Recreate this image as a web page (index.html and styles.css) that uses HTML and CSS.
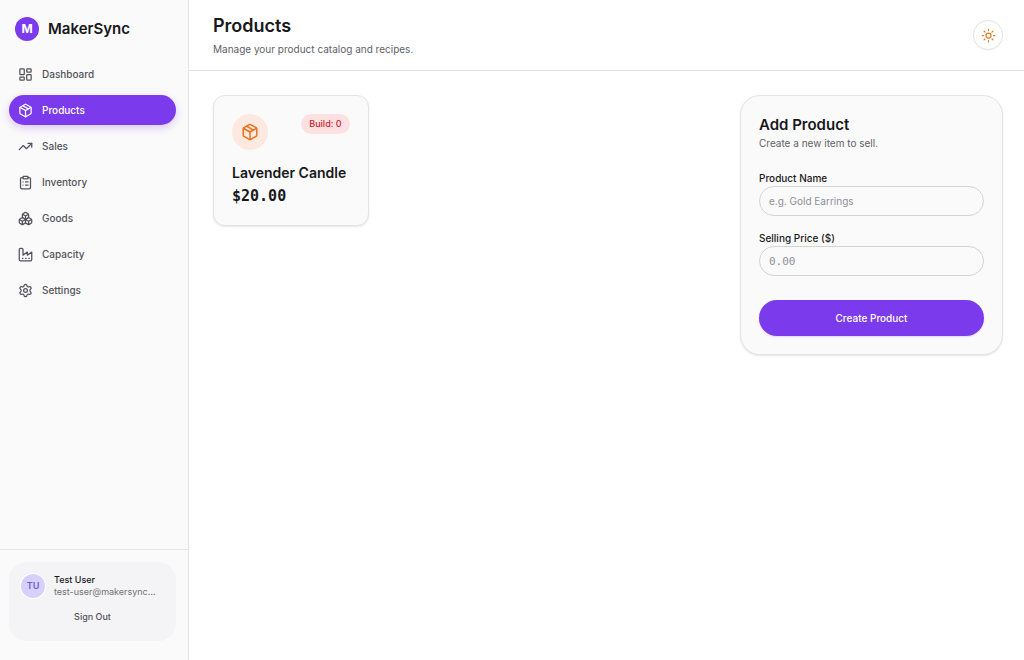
FILE: index.html
```html
<!DOCTYPE html>
<html lang="en">
<head>
<meta charset="utf-8">
<meta name="viewport" content="width=device-width, initial-scale=1">
<title>Products - MakerSync</title>
<link rel="stylesheet" href="styles.css">
</head>
<body>
<svg class="sprite" aria-hidden="true">
  <symbol id="package" viewBox="0 0 24 24"><path d="m7.5 4.27 9 5.15"/><path d="M21 8a2 2 0 0 0-1-1.73l-7-4a2 2 0 0 0-2 0l-7 4A2 2 0 0 0 3 8v8a2 2 0 0 0 1 1.73l7 4a2 2 0 0 0 2 0l7-4A2 2 0 0 0 21 16Z"/><path d="m3.3 7 8.7 5 8.7-5"/><path d="M12 22V12"/></symbol>
</svg>
<div class="app">
  <aside class="sidebar">
    <div class="brand"><span class="brand-mark">M</span><span class="brand-name">MakerSync</span></div>
    <nav class="nav">
      <a class="nav-link" href="#"><svg class="icon" viewBox="0 0 24 24"><rect width="7" height="9" x="3" y="3" rx="1"/><rect width="7" height="5" x="14" y="3" rx="1"/><rect width="7" height="9" x="14" y="12" rx="1"/><rect width="7" height="5" x="3" y="16" rx="1"/></svg>Dashboard</a>
      <a class="nav-link active" href="#" aria-current="page"><svg class="icon"><use href="#package"/></svg>Products</a>
      <a class="nav-link" href="#"><svg class="icon" viewBox="0 0 24 24"><path d="m22 7-8.500 8.500-5-5L2 17"/><path d="M16 7h6v6"/></svg>Sales</a>
      <a class="nav-link" href="#"><svg class="icon" viewBox="0 0 24 24"><rect width="8" height="4" x="8" y="2" rx="1"/><path d="M16 4h2a2 2 0 0 1 2 2v14a2 2 0 0 1-2 2H6a2 2 0 0 1-2-2V6a2 2 0 0 1 2-2h2M12 11h4M12 16h4M8 11h.01M8 16h.01"/></svg>Inventory</a>
      <a class="nav-link" href="#"><svg class="icon" viewBox="0 0 24 24"><path d="M2.970 12.920A2 2 0 0 0 2 14.630v3.240a2 2 0 0 0 .97 1.710l3 1.800a2 2 0 0 0 2.060 0L12 19v-5.500l-5-3-4.030 2.420ZM7 16.500l-4.740-2.850M7 16.500l5-3M7 16.500v5.170M12 13.500V19l3.970 2.380a2 2 0 0 0 2.060 0l3-1.800a2 2 0 0 0 .97-1.710v-3.240a2 2 0 0 0-.97-1.710L17 10.500l-5 3ZM17 16.500l-5-3M17 16.500l4.740-2.850M17 16.500v5.170"/><path d="M7.970 4.420A2 2 0 0 0 7 6.130v4.370l5 3 5-3V6.130a2 2 0 0 0-.97-1.710l-3-1.800a2 2 0 0 0-2.060 0l-3 1.800ZM12 8 7.260 5.150M12 8l4.740-2.850M12 13.500V8"/></svg>Goods</a>
      <a class="nav-link" href="#"><svg class="icon" viewBox="0 0 24 24"><path d="M2 20a2 2 0 0 0 2 2h16a2 2 0 0 0 2-2V8l-7 5V8l-7 5V4a2 2 0 0 0-2-2H4a2 2 0 0 0-2 2ZM17 18h1M12 18h1M7 18h1"/></svg>Capacity</a>
      <a class="nav-link" href="#"><svg class="icon" viewBox="0 0 24 24"><path d="M9.671 4.136a2.340 2.340 0 0 1 4.659 0 2.340 2.340 0 0 0 3.319 1.915 2.340 2.340 0 0 1 2.330 4.033 2.340 2.340 0 0 0 0 3.831 2.340 2.340 0 0 1-2.330 4.033 2.340 2.340 0 0 0-3.319 1.915 2.340 2.340 0 0 1-4.659 0 2.340 2.340 0 0 0-3.320-1.915 2.340 2.340 0 0 1-2.330-4.033 2.340 2.340 0 0 0 0-3.831A2.340 2.340 0 0 1 6.350 6.051a2.340 2.340 0 0 0 3.319-1.915"/><circle cx="12" cy="12" r="3"/></svg>Settings</a>
    </nav>
    <div class="account">
      <div class="account-card">
        <div class="account-row">
          <span class="avatar">TU</span>
          <div class="account-text"><div class="account-name">Test User</div><div class="account-mail">test-user@makersync…</div></div>
        </div>
        <button class="sign-out" type="button">Sign Out</button>
      </div>
    </div>
  </aside>
  <div class="page">
    <header class="page-header">
      <div><h1 class="page-title">Products</h1><p class="page-note">Manage your product catalog and recipes.</p></div>
      <button class="theme-toggle" type="button" aria-label="Toggle theme"><svg class="icon" viewBox="0 0 24 24"><circle cx="12" cy="12" r="4"/><path d="M12 2v2M12 20v2M4.930 4.930l1.410 1.410M17.660 17.660l1.410 1.410M2 12h2M20 12h2M6.340 17.660l-1.410 1.410M19.070 4.930l-1.410 1.410"/></svg></button>
    </header>
    <main class="content">
      <section class="products">
        <article class="product">
          <div class="product-top"><span class="product-icon"><svg class="icon icon-large"><use href="#package"/></svg></span><span class="badge">Build: 0</span></div>
          <h2 class="product-name">Lavender Candle</h2>
          <p class="price">$20.00</p>
        </article>
      </section>
      <form class="panel">
        <h2 class="panel-title">Add Product</h2>
        <p class="panel-note">Create a new item to sell.</p>
        <div class="field"><label class="label" for="name">Product Name</label><input class="input" id="name" type="text" placeholder="e.g. Gold Earrings"></div>
        <div class="field"><label class="label" for="price">Selling Price ($)</label><input class="input mono" id="price" type="text" inputmode="decimal" placeholder="0.00"></div>
        <button class="submit" type="button">Create Product</button>
      </form>
    </main>
  </div>
</div>
</body>
</html>
```
FILE: styles.css
```css
* { box-sizing: border-box; }
body { margin: 0; background: #fff; color: #18181b; font-family: Inter, "Liberation Sans", sans-serif; font-size: 10px; line-height: 16px; }
h1, h2, p { margin: 0; }
button, input { font: inherit; color: inherit; }
button { cursor: pointer; }
.sprite { position: absolute; width: 0; height: 0; }
.icon { width: 15px; height: 15px; flex: none; fill: none; stroke: currentColor; stroke-width: 2; stroke-linecap: round; stroke-linejoin: round; }
.icon-large { width: 18px; height: 18px; }
.app { display: grid; grid-template-columns: 189px minmax(0, 1fr); min-height: 100vh; }
.sidebar { display: flex; flex-direction: column; background: #fafafa; border-right: 1px solid #e4e4e7; }
.brand { display: flex; align-items: center; gap: 9px; padding: 17px 15px 18px; }
.brand-mark { display: grid; place-items: center; width: 24px; height: 24px; border-radius: 50%; background: #7c3aed; color: #fff; font-size: 12px; font-weight: 700; }
.brand-name { font-size: 15px; line-height: 24px; font-weight: 600; }
.nav { display: flex; flex-direction: column; gap: 6px; padding: 0 12px 0 9px; flex: 1; }
.nav-link { display: flex; align-items: center; gap: 9px; height: 30px; padding: 0 9px; border-radius: 15px; color: #52525b; font-weight: 500; text-decoration: none; }
.nav-link.active { background: #7c3aed; color: #fff; box-shadow: 0 3px 8px #7c3aed40; }
.account { padding: 12px 12px 19px 9px; border-top: 1px solid #e4e4e7; }
.account-card { padding: 12px; border-radius: 18px; background: #f4f4f6; }
.account-row { display: flex; align-items: center; gap: 9px; }
.avatar { display: grid; place-items: center; flex: none; width: 24px; height: 24px; border-radius: 50%; background: #d6d0fb; color: #6d5bd0; font-size: 9px; font-weight: 600; box-shadow: 0 0 0 1px #fff; }
.account-text { min-width: 0; font-size: 9px; line-height: 12px; }
.account-name { font-weight: 500; }
.account-mail { color: #71717a; }
.sign-out { display: block; width: 100%; height: 24px; margin-top: 7px; padding: 0; border: 0; background: none; color: #52525b; font-size: 9px; font-weight: 500; }
.page-header { display: flex; align-items: center; justify-content: space-between; min-height: 71px; padding: 0 21px 0 24px; border-bottom: 1px solid #e4e4e7; }
.page-title { font-size: 18px; line-height: 24px; font-weight: 600; }
.page-note { margin-top: 3px; color: #5f5f68; }
.theme-toggle { display: grid; place-items: center; width: 30px; height: 30px; padding: 0; border: 1px solid #e4e4e7; border-radius: 50%; background: #fff; color: #e17a22; box-shadow: 0 1px 2px #0000000d; }
.content { display: grid; grid-template-columns: minmax(0, 1fr) 263px; gap: 24px; align-items: start; padding: 24px 21px 24px 24px; }
.products { display: grid; grid-template-columns: repeat(3, minmax(0, 1fr)); gap: 18px; }
.product, .panel { padding: 18px; border: 1px solid #e4e4e7; background: #fafafa; box-shadow: 0 1px 2px #0000001a; }
.product { border-radius: 12px; }
.product-top { display: flex; align-items: flex-start; justify-content: space-between; }
.product-icon { display: grid; place-items: center; width: 36px; height: 36px; border-radius: 50%; background: #fde9df; color: #e9721c; }
.badge { padding: 2px 8px; border-radius: 10px; background: #fde0e1; color: #c9252d; font-size: 9px; line-height: 16px; font-weight: 500; }
.product-name { margin-top: 12px; font-size: 14px; line-height: 21px; font-weight: 600; white-space: nowrap; }
.price { margin-top: 3px; font: 700 15px/21px "DejaVu Sans Mono", monospace; }
.panel { border-radius: 20px; }
.panel-title { font-size: 15px; line-height: 21px; font-weight: 600; }
.panel-note { color: #5f5f68; margin-bottom: 19px; }
.field { margin-bottom: 14px; }
.label { display: block; font-weight: 500; }
.input { display: block; width: 100%; height: 30px; padding: 0 9px; border: 1px solid #d4d4d8; border-radius: 15px; background: #fafafa; }
.input::placeholder { color: #8e8e98; opacity: 1; }
.mono { font-family: "DejaVu Sans Mono", monospace; font-size: 11px; }
.submit { display: block; width: 100%; height: 36px; margin-top: 24px; padding: 0; border: 0; border-radius: 18px; background: #7c3aed; color: #fff; font-weight: 500; box-shadow: 0 1px 2px #7c3aed33; }
```
